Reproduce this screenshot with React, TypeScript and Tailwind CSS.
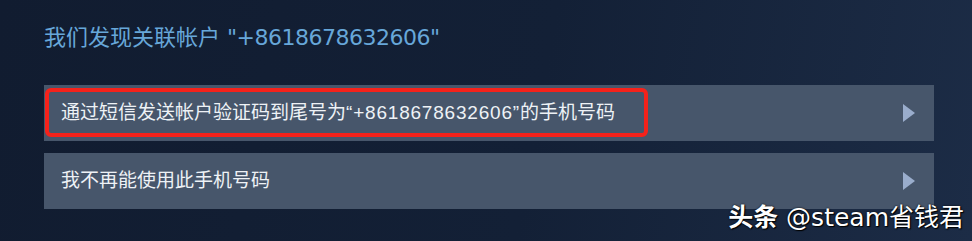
import { ReactNode } from 'react';

const font = '"DejaVu Sans", "Noto Sans CJK SC", sans-serif';
const rowFont = '"Liberation Sans", "Noto Sans CJK SC", sans-serif';

const Row = ({ children }: { children: ReactNode }) => (
    <div className="h-[56px] bg-[#47566b] flex items-center justify-between pl-[18px] pr-[18px]">
        {children}
        <svg width="12" height="18" viewBox="0 0 12 18" className="mr-[1px]">
            <path d="M0 0 L12 9 L0 18 Z" fill="#9aadcc" />
        </svg>
    </div>
);

export default function App() {
    return (
        <div
            className="relative w-[972px] h-[241px] overflow-hidden bg-[linear-gradient(100deg,#111c30_0%,#132036_55%,#1c2c46_100%)]"
            style={{ fontFamily: font }}
        >
            <div className="pl-[44px] pr-[38px] pt-[24px]">
                {/* Heading */}
                <h1 className="text-[22px] leading-[28px] text-[#67a7d9] h-[61px]">
                    我们发现关联帐户 <span className="tracking-[-0.5px]">"+8618678632606"</span>
                </h1>

                {/* Options */}
                <div className="flex flex-col gap-[12px]" style={{ fontFamily: rowFont }}>
                    <Row>
                        <span className="relative text-[19px] text-[#eef2f6] -ml-[1px]">
                            通过短信发送帐户验证码到尾号为<span className="tracking-[0.8px]">“+8618678632606”</span>的手机号码
                            <span className="absolute -left-[16px] -right-[33px] -top-[11px] -bottom-[10px] border-[4px] border-[#f5221b] rounded-[6px]" />
                        </span>
                    </Row>
                    <Row>
                        <span className="text-[19px] text-[#eef2f6] -ml-[1px]">我不再能使用此手机号码</span>
                    </Row>
                </div>
            </div>

            {/* Watermark */}
            <div className="absolute right-[8px] top-[202px] text-[25px] leading-[32px] text-white [text-shadow:1px_1px_1px_#000,0_0_2px_#000]">
                <span className="font-bold">头条</span> @steam省钱君
            </div>
        </div>
    );
}
